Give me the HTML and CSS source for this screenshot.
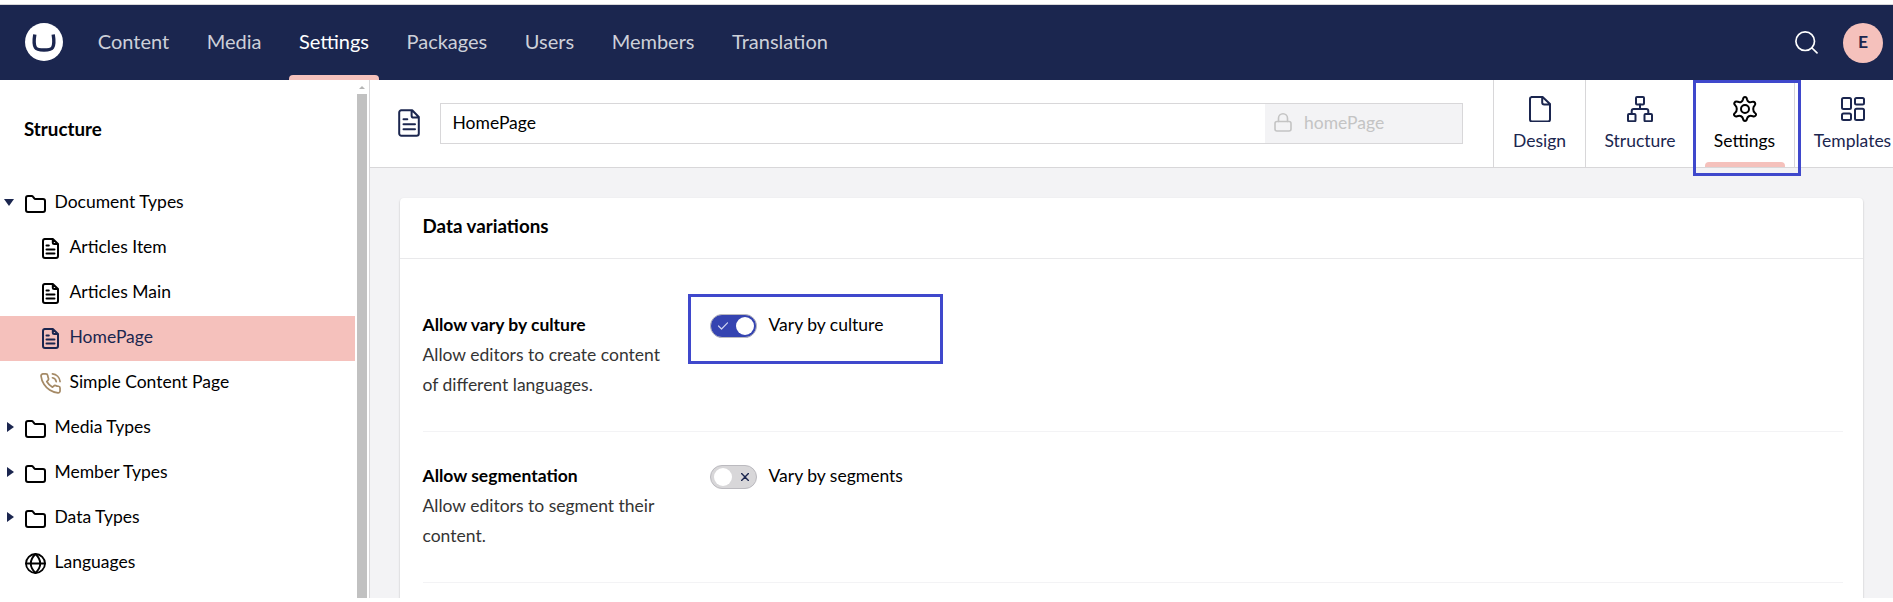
FILE: index.html
```html
<!DOCTYPE html>
<html lang="en">
<head>
<meta charset="utf-8">
<title>HomePage</title>
<link rel="stylesheet" href="styles.css">
</head>
<body>
<svg class="defs" width="0" height="0">
  <symbol id="doc" viewBox="0 0 22 28"><path d="M3 1.2h11.2L20.8 8v16.6a2.2 2.2 0 0 1-2.2 2.2H3.4a2.2 2.2 0 0 1-2.2-2.2V3.4A2.2 2.2 0 0 1 3.4 1.2M13.6 1.4v5a2.2 2.2 0 0 0 2.2 2.2h5M5.5 10.3h3.8M5.5 15.3h11.5M5.5 20.3h11.5"/></symbol>
  <symbol id="doc-small" viewBox="0 0 17 21"><path d="M2.500 1h8.300L16 6v12a2 2 0 0 1-2 2H3a2 2 0 0 1-2-2V3a2 2 0 0 1 2-2M10.800 1.200v3.300a1.500 1.500 0 0 0 1.500 1.500H16M4.500 7.500h2.300M4.500 11.500h8M4.500 15.500h8"/></symbol>
  <symbol id="folder" viewBox="0 0 21 18"><path d="M1 3a2 2 0 0 1 2-2h3.600q1 0 1.500.8l1 1.400q.5.8 1.500.8H18a2 2 0 0 1 2 2v9a2 2 0 0 1-2 2H3a2 2 0 0 1-2-2z"/></symbol>
</svg>
<header class="topbar">
  <svg class="logo" viewBox="0 0 38 38"><circle cx="19" cy="19" r="19" fill="#fff" stroke="none"/><path d="M9.800 11.500c-1 6-.9 10.500.6 13 1 1.900 4 2.500 8.600 2.500s7.600-.6 8.600-2.500c1.500-2.500 1.600-7 .6-13" fill="none" stroke="#1b264f" stroke-width="3.400" stroke-linecap="butt"/></svg>
  <nav class="sections">
    <a>Content</a><a>Media</a><a class="current">Settings</a><a>Packages</a><a>Users</a><a>Members</a><a>Translation</a>
  </nav>
  <svg class="search" viewBox="0 0 23 23"><circle cx="10.200" cy="10.200" r="9.300"/><path d="M17 17l5 4.800"/></svg>
  <span class="avatar">E</span>
</header>
<div class="shell">
  <aside class="sidebar">
    <div class="tree">
      <h2 class="tree-title">Structure</h2>
      <div class="node"><i class="caret open"></i><svg class="folder"><use href="#folder"/></svg>Document Types</div>
      <div class="node child"><svg class="doc"><use href="#doc-small"/></svg>Articles Item</div>
      <div class="node child"><svg class="doc"><use href="#doc-small"/></svg>Articles Main</div>
      <div class="node child active"><svg class="doc"><use href="#doc-small"/></svg>HomePage</div>
      <div class="node child"><svg class="phone" viewBox="1 1 22 22"><path d="M22 16.920v3a2 2 0 0 1-2.180 2 19.790 19.790 0 0 1-8.630-3.070 19.500 19.500 0 0 1-6-6 19.790 19.790 0 0 1-3.070-8.670A2 2 0 0 1 4.110 2h3a2 2 0 0 1 2 1.720 12.840 12.840 0 0 0 .7 2.810 2 2 0 0 1-.45 2.110L8.090 9.910a16 16 0 0 0 6 6l1.270-1.270a2 2 0 0 1 2.110-.45 12.840 12.840 0 0 0 2.810.7A2 2 0 0 1 22 16.920zM14.050 2a9 9 0 0 1 8 7.940M14.050 6A5 5 0 0 1 18 10"/></svg>Simple Content Page</div>
      <div class="node"><i class="caret"></i><svg class="folder"><use href="#folder"/></svg>Media Types</div>
      <div class="node"><i class="caret"></i><svg class="folder"><use href="#folder"/></svg>Member Types</div>
      <div class="node"><i class="caret"></i><svg class="folder"><use href="#folder"/></svg>Data Types</div>
      <div class="node"><i class="caret none"></i><svg class="globe" viewBox="0 0 21 21"><circle cx="10.500" cy="10.500" r="9.500"/><path d="M1 10.500h19M10.500 1q-9.500 9.500 0 19M10.500 1q9.500 9.500 0 19"/></svg>Languages</div>
    </div>
    <div class="scrollbar"><i class="arrow"></i><i class="thumb"></i></div>
  </aside>
  <main class="editor">
    <div class="editor-head">
      <svg class="type-icon"><use href="#doc"/></svg>
      <div class="name-field"><span class="name">HomePage</span><span class="alias"><svg class="lock" viewBox="0 0 18 19"><rect x="1" y="8.500" width="16" height="9.500" rx="2"/><path d="M4.500 8.500V5.300a4.500 4.500 0 0 1 9 0v3.200"/></svg>homePage</span></div>
      <nav class="apps">
        <a class="app design"><svg viewBox="0 0 26 26"><path d="M4.400 1h11.200L23 8v15.500a2 2 0 0 1-2 2H5a2 2 0 0 1-2-2V3a2 2 0 0 1 2-2M15.200 1v5.500a2 2 0 0 0 2 2H23"/></svg>Design</a>
        <a class="app structure"><svg viewBox="0 0 26 26"><rect x="9" y="1" width="8" height="7.500" rx="1"/><rect x="1" y="18" width="7.500" height="7.200" rx="1"/><rect x="17.500" y="18" width="7.500" height="7.200" rx="1"/><path d="M13 8.500v4.500M4.700 18v-3a2 2 0 0 1 2-2h12.600a2 2 0 0 1 2 2v3"/></svg>Structure</a>
        <a class="app settings"><svg viewBox="0 0 26 26"><path d="M11 3.200Q11.400 1 13 1T15 3.200C15.500 5.600 17.500 6.800 19.900 5.900Q22 5.200 22.900 6.600T22.800 9.200C20.700 11 20.700 14.900 22.800 16.800Q24.700 18.200 23.700 19.500T20.900 20.200C17.500 19.200 15.500 20.400 15 22.800Q14.600 25 13 25T11 22.800C10.500 20.400 8.500 19.200 5.100 20.200Q3.200 20.800 2.300 19.500T3.200 16.800C5.300 14.900 5.300 11 3.200 9.200Q1.700 8 2.600 6.500T5.900 5.800C8.500 6.800 10.500 5.600 11 3.200Z"/><circle cx="13" cy="13" r="4"/></svg>Settings</a>
        <a class="app templates"><svg viewBox="0 0 26 26"><rect x="2" y="2" width="9" height="11" rx="1.500"/><rect x="15" y="2" width="9" height="6.500" rx="1.500"/><rect x="2" y="17.500" width="9" height="6.500" rx="1.500"/><rect x="15" y="12.800" width="9" height="11.200" rx="1.500"/></svg>Templates</a>
      </nav>
    </div>
    <section class="card">
      <h3 class="card-title">Data variations</h3>
      <div class="card-body">
        <div class="prop">
          <div class="prop-label"><b>Allow vary by culture</b><br>Allow editors to create content of different languages.</div>
          <div class="prop-value"><span class="toggle on"><svg class="check" viewBox="0 0 10 8"><path d="M.5 4l3 3L9.500.8"/></svg><i class="knob"></i></span>Vary by culture</div>
        </div>
        <div class="prop">
          <div class="prop-label"><b>Allow segmentation</b><br>Allow editors to segment their content.</div>
          <div class="prop-value"><span class="toggle"><i class="knob"></i><svg class="cross" viewBox="0 0 8 8"><path d="M.6.6l6.800 6.800M7.400.6L.6 7.400"/></svg></span>Vary by segments</div>
        </div>
      </div>
    </section>
  </main>
</div>
<div class="mark mark-tab"></div>
<div class="mark mark-toggle"></div>
</body>
</html>
```
FILE: styles.css
```css
* { box-sizing: border-box; }
body {
  margin: 0;
  padding: 4px 0;
  width: 1893px;
  height: 602px;
  overflow: hidden;
  background: #fff;
  color: #000;
  font: 17.5px/30px Lato, sans-serif;
}
svg { fill: none; stroke: currentColor; stroke-width: 2; stroke-linecap: round; stroke-linejoin: round; flex: none; }
.defs { position: absolute; }

.topbar {
  display: flex;
  align-items: center;
  height: 76px;
  padding: 0 10px 0 25px;
  border-top: 1px solid #d8d7d9;
  background: #1b264f;
  color: #fff;
}
.logo { width: 38px; height: 38px; margin-bottom: 1px; }
.sections { display: flex; align-self: stretch; flex: 1; margin-left: 16px; }
.sections a {
  display: flex;
  align-items: center;
  padding: 0 18.75px 4px;
  font-size: 20px;
  color: #cdd0d9;
  position: relative;
}
.sections .current { color: #fff; }
.sections .current::after {
  content: "";
  position: absolute;
  left: 9px;
  right: 9px;
  bottom: 0;
  height: 5px;
  border-radius: 4px 4px 0 0;
  background: #f5c1bc;
}
.search { width: 23px; height: 23px; margin-right: 25px; stroke-width: 1.7; }
.avatar {
  width: 40px;
  height: 40px;
  border-radius: 50%;
  background: #f5c1bc;
  color: #1b264f;
  font-weight: 700;
  text-align: center;
  line-height: 37px;
}

.shell { display: flex; height: 518px; }
.sidebar { display: flex; width: 370px; flex: none; border-right: 1px solid #d8d7d9; }
.tree { width: 355px; }
.tree-title { margin: 0; height: 101px; padding: 34px 0 0 24px; font-size: 18.75px; line-height: 30px; font-weight: 700; }
.node { display: flex; align-items: center; height: 45px; padding: 0 0 4px 4px; white-space: nowrap; }
.node svg { position: relative; top: 2px; }
.child { padding-left: 40px; }
.active { background: #f5c1bc; color: #1b264f; }
.caret { width: 21px; flex: none; color: #1b264f; }
.caret::before {
  content: "";
  display: block;
  margin-left: 3px;
  width: 0;
  border: 5px solid transparent;
  border-left: 7px solid;
  border-right: 0;
}
.caret.open::before { margin: 2px 0 0; border: 5px solid transparent; border-top: 7px solid; border-bottom: 0; }
.caret.none::before { border-color: transparent; }
.folder { width: 21px; height: 18px; margin-right: 8.500px; }
.globe { width: 21px; height: 21px; margin-right: 8.500px; stroke-width: 1.8; }
.doc { width: 21px; height: 21px; margin-right: 8.500px; }
.phone { width: 21px; height: 21px; margin-right: 8.500px; color: #a58a66; stroke-width: 1.8; }
.scrollbar { display: flex; flex-direction: column; width: 10px; margin-left: 2px; padding-top: 6px; }
.arrow { width: 0; margin: 0 2px 5px; border: 3px solid transparent; border-top: 0; border-bottom: 3px solid #b5b5b5; }
.thumb { flex: 1; background: #c1c1c1; }

.editor { flex: 1; min-width: 0; overflow: hidden; background: #f3f3f5; }
.editor-head { display: flex; align-items: center; height: 88px; padding-left: 27px; border-bottom: 1px solid #d8d7d9; background: #fff; }
.type-icon { width: 24px; height: 28px; margin: 0 19px 2px 0; color: #1b264f; }
.name-field { display: flex; width: 1023px; height: 41px; flex: none; border: 1px solid #d8d7d9; line-height: 37px; }
.name { flex: 1; padding-left: 11.500px; }
.alias { display: flex; align-items: center; width: 197px; padding: 0 0 2px 9px; background: #f3f3f5; color: #c4c4c4; }
.lock { width: 18px; height: 19px; margin-right: 12px; stroke-width: 1.6; }
.apps { display: flex; align-self: stretch; margin-left: 30px; }
.app {
  display: flex;
  flex-direction: column;
  align-items: center;
  flex: none;
  padding-top: 16px;
  border-left: 1px solid #d8d7d9;
  color: #1b264f;
  line-height: 30px;
  position: relative;
}
.app svg { width: 26px; height: 26px; margin-bottom: 4px; }
.design { width: 92px; }
.structure { width: 109px; }
.settings { width: 100px; color: #000; }
.settings::after {
  content: "";
  position: absolute;
  left: 10px;
  right: 9px;
  bottom: 0;
  height: 5px;
  border-radius: 4px 4px 0 0;
  background: #f5c1bc;
}
.templates { width: 116px; }

.card { width: 1463px; height: 420px; margin: 30px 0 0 30px; border-radius: 4px; background: #fff; box-shadow: 0 1px 2px rgba(0, 0, 0, .25); }
.card-title { margin: 0; height: 61px; padding: 13px 22.500px 0; border-bottom: 1px solid #e9e9eb; font-size: 18.75px; line-height: 30px; font-weight: 700; }
.card-body { padding: 22px 20px 0 22.500px; }
.prop { display: flex; height: 151px; padding-top: 29px; border-bottom: 1px solid #f3f3f5; }
.prop-label { width: 287px; padding-right: 40px; color: #343434; }
.prop-label b { color: #000; font-weight: 700; }
.prop-value { display: flex; height: 30px; align-items: center; }
.toggle { display: flex; align-items: center; justify-content: space-between; width: 47px; height: 24px; margin: 1px 12px 0 0; padding: 0 3px; border: 1px solid #bbbabf; border-radius: 12px; background: #d8d7d9; }
.toggle.on { background: #3544b1; padding-right: 2px; padding-left: 7px; }
.knob { width: 18px; height: 18px; border-radius: 50%; background: #fff; }
.check { width: 10px; height: 8px; color: #d0d4f0; stroke-width: 1.2; }
.cross { width: 8px; height: 8px; margin-right: 4px; color: #1b264f; stroke-width: 1.4; }

.mark { position: absolute; border: 3px solid #3f48cc; }
.mark-tab { left: 1693px; top: 80px; width: 108px; height: 96px; }
.mark-toggle { left: 688px; top: 294px; width: 255px; height: 70px; }
```
